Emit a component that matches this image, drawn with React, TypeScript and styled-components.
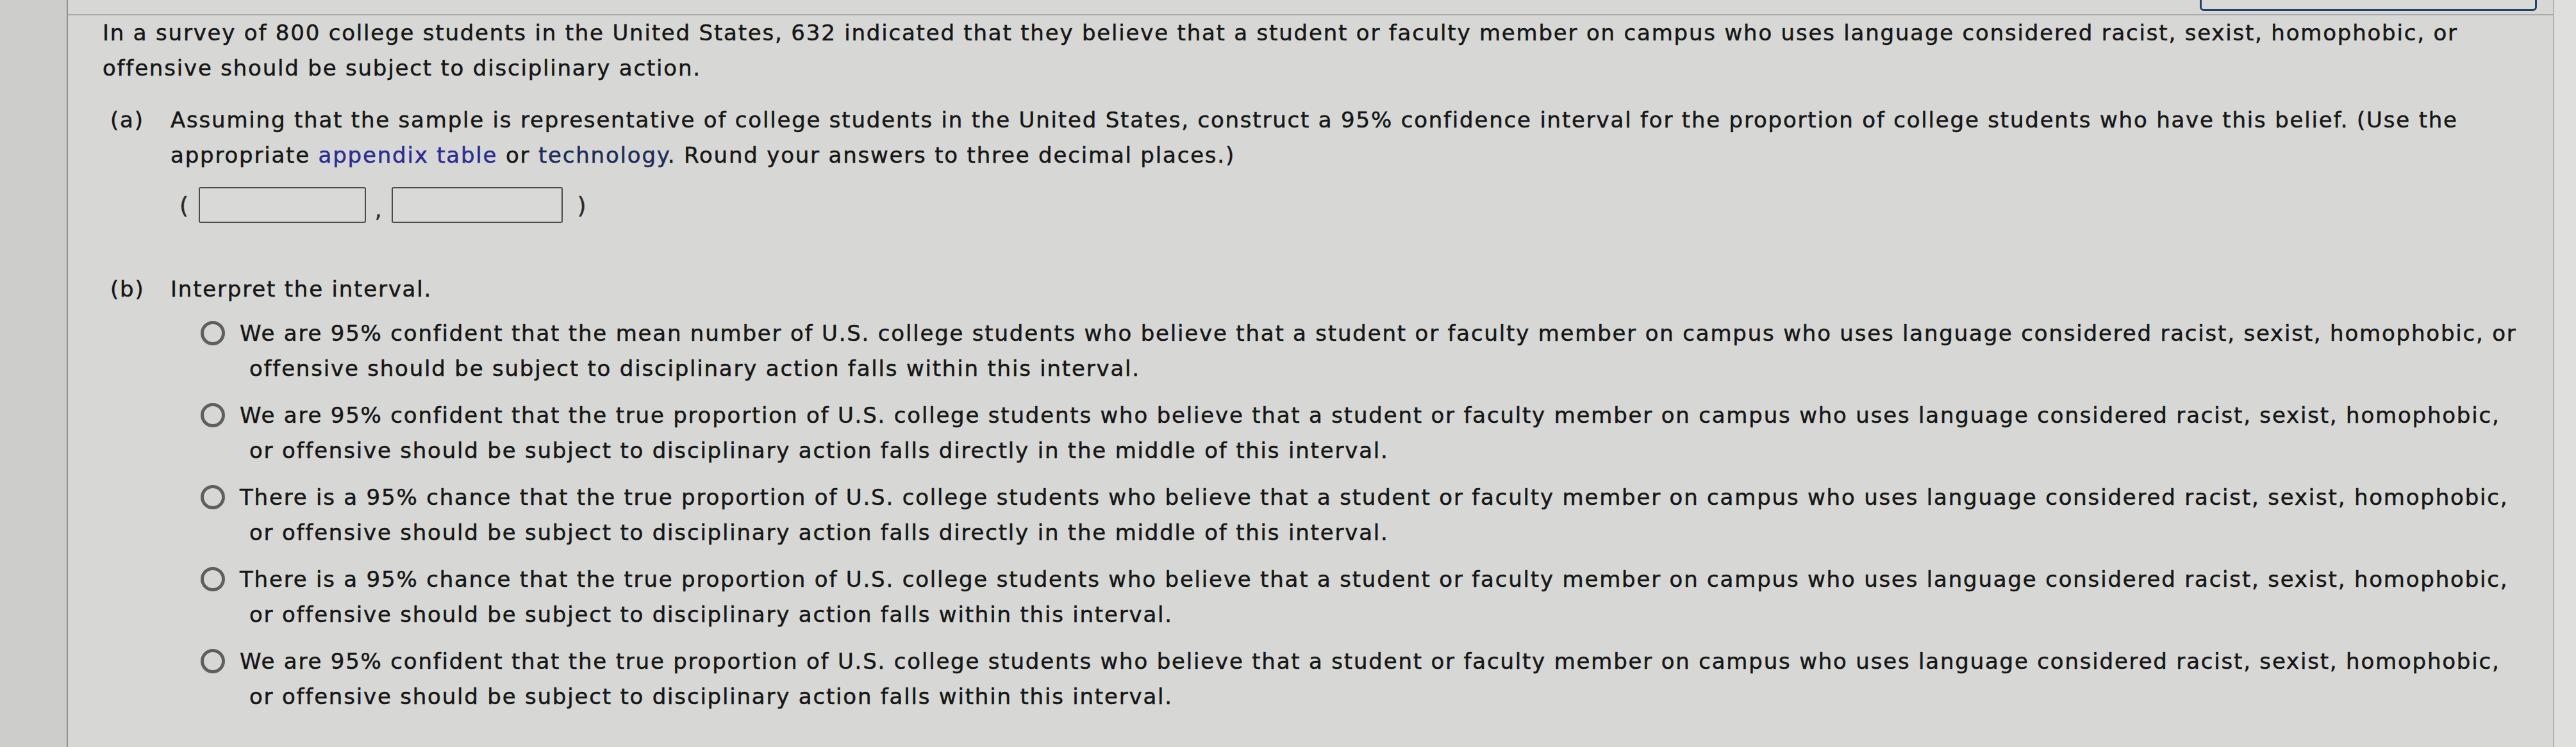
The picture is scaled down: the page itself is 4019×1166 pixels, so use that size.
import React from 'react'
import styled, { createGlobalStyle } from 'styled-components'

const GlobalStyle = createGlobalStyle`
  html, body {
    margin: 0;
    padding: 0;
    background: #d4d5d3;
  }
  body {
    font-family: 'DejaVu Sans', Verdana, sans-serif;
    color: #161616;
  }
`

const options: string[][] = [
  [
    'We are 95% confident that the mean number of U.S. college students who believe that a student or faculty member on campus who uses language considered racist, sexist, homophobic, or',
    'offensive should be subject to disciplinary action falls within this interval.',
  ],
  [
    'We are 95% confident that the true proportion of U.S. college students who believe that a student or faculty member on campus who uses language considered racist, sexist, homophobic,',
    'or offensive should be subject to disciplinary action falls directly in the middle of this interval.',
  ],
  [
    'There is a 95% chance that the true proportion of U.S. college students who believe that a student or faculty member on campus who uses language considered racist, sexist, homophobic,',
    'or offensive should be subject to disciplinary action falls directly in the middle of this interval.',
  ],
  [
    'There is a 95% chance that the true proportion of U.S. college students who believe that a student or faculty member on campus who uses language considered racist, sexist, homophobic,',
    'or offensive should be subject to disciplinary action falls within this interval.',
  ],
  [
    'We are 95% confident that the true proportion of U.S. college students who believe that a student or faculty member on campus who uses language considered racist, sexist, homophobic,',
    'or offensive should be subject to disciplinary action falls within this interval.',
  ],
]

const App: React.FC = () => {
  return (
    <Page>
      <GlobalStyle />
      <LeftGutter />
      <Panel>
        <TopBar>
          <AskButton />
        </TopBar>
        <Content>
          <Text>
            <Line>
              In a survey of 800 college students in the United States, 632 indicated that they believe that a student or faculty member on campus who uses language considered racist, sexist, homophobic, or
            </Line>
            <Line>offensive should be subject to disciplinary action.</Line>
          </Text>

          <Part $top={26}>
            <PartLabel>(a)</PartLabel>
            <PartBody>
              <Text>
                <Line>
                  Assuming that the sample is representative of college students in the United States, construct a 95% confidence interval for the proportion of college students who have this belief. (Use the
                </Line>
                <Line>
                  appropriate <Link $color="#2c2c92">appendix table</Link> or{' '}
                  <Link $color="#1d2c58">technology</Link>. Round your answers to three decimal places.)
                </Line>
              </Text>
            </PartBody>
          </Part>

          <IntervalRow>
            <Paren $side="open">(</Paren>
            <AnswerBox $width={261} />
            <Comma>,</Comma>
            <AnswerBox $width={267} />
            <Paren $side="close">)</Paren>
          </IntervalRow>

          <Part $top={76}>
            <PartLabel>(b)</PartLabel>
            <PartBody>
              <Text>
                <Line>Interpret the interval.</Line>
              </Text>
              <OptionList>
                {options.map((lines, i) => (
                  <Option key={i}>
                    <Radio type="radio" name="interpret" />
                    <OptionText>
                      {lines.map((l, j) => (
                        <Line key={j}>{l}</Line>
                      ))}
                    </OptionText>
                  </Option>
                ))}
              </OptionList>
            </PartBody>
          </Part>
        </Content>
      </Panel>
      <RightGutter />
    </Page>
  )
}

const Page = styled.div`
  display: flex;
  width: 100%;
  height: 1166px;
  overflow: hidden;
`

const LeftGutter = styled.div`
  width: 104px;
  flex-shrink: 0;
  background: #cdcecc;
  border-right: 2px solid #8f908e;
`

const RightGutter = styled.div`
  width: 34px;
  flex-shrink: 0;
  background: #dfe0de;
  border-left: 2px solid #b4b5b3;
`

const Panel = styled.div`
  flex: 1;
  display: flex;
  flex-direction: column;
  background: #d7d8d6;
`

const TopBar = styled.div`
  height: 22px;
  display: flex;
  justify-content: flex-end;
  align-items: flex-start;
  padding-right: 25px;
  border-bottom: 2px solid #a9aaa8;
`

const AskButton = styled.div`
  width: 520px;
  height: 14px;
  border: 3px solid #23406f;
  border-top: none;
  border-radius: 0 0 6px 6px;
  background: #d9dad8;
`

const Content = styled.div`
  padding: 0 30px 0 54px;
  font-size: 34px;
  letter-spacing: 1.8px;
  line-height: 55px;
  -webkit-text-stroke: 0.5px currentColor;
`

const Text = styled.div`
  margin: 0;
`

const Line = styled.span`
  display: block;
  white-space: nowrap;
`

const Link = styled.span<{ $color: string }>`
  color: ${p => p.$color};
  cursor: pointer;
`

const Part = styled.div<{ $top: number }>`
  display: flex;
  margin-top: ${p => p.$top}px;
  padding-left: 12px;
`

const PartLabel = styled.div`
  width: 94px;
  flex-shrink: 0;
`

const PartBody = styled.div`
  flex: 1;
`

const IntervalRow = styled.div`
  display: flex;
  align-items: center;
  height: 56px;
  margin: 22px 0 0 120px;
`

const Paren = styled.span<{ $side: 'open' | 'close' }>`
  font-size: 36px;
  color: #2a2a2a;
  margin: ${p => (p.$side === 'open' ? '0 14px 0 0' : '0 0 0 22px')};
`

const Comma = styled.span`
  margin: 14px 14px 0 14px;
  color: #2a2a2a;
`

const AnswerBox = styled.input<{ $width: number }>`
  box-sizing: border-box;
  width: ${p => p.$width}px;
  height: 56px;
  margin: 0;
  border: 2px solid #4c4d4b;
  border-radius: 3px;
  background: #d9dad8;
  outline: none;
`

const OptionList = styled.div`
  display: flex;
  flex-direction: column;
  gap: 18px;
  margin: 14px 0 0 47px;
`

const Option = styled.label`
  display: flex;
  align-items: flex-start;
  gap: 23px;
`

const Radio = styled.input`
  appearance: none;
  box-sizing: border-box;
  width: 38px;
  height: 38px;
  margin: 8px 0 0 0;
  flex-shrink: 0;
  border: 5px solid #5f605e;
  border-radius: 50%;
  background: transparent;
`

const OptionText = styled.div`
  padding-left: 15px;
  text-indent: -15px;
  & > span + span {
    text-indent: 0;
  }
`

export default App
